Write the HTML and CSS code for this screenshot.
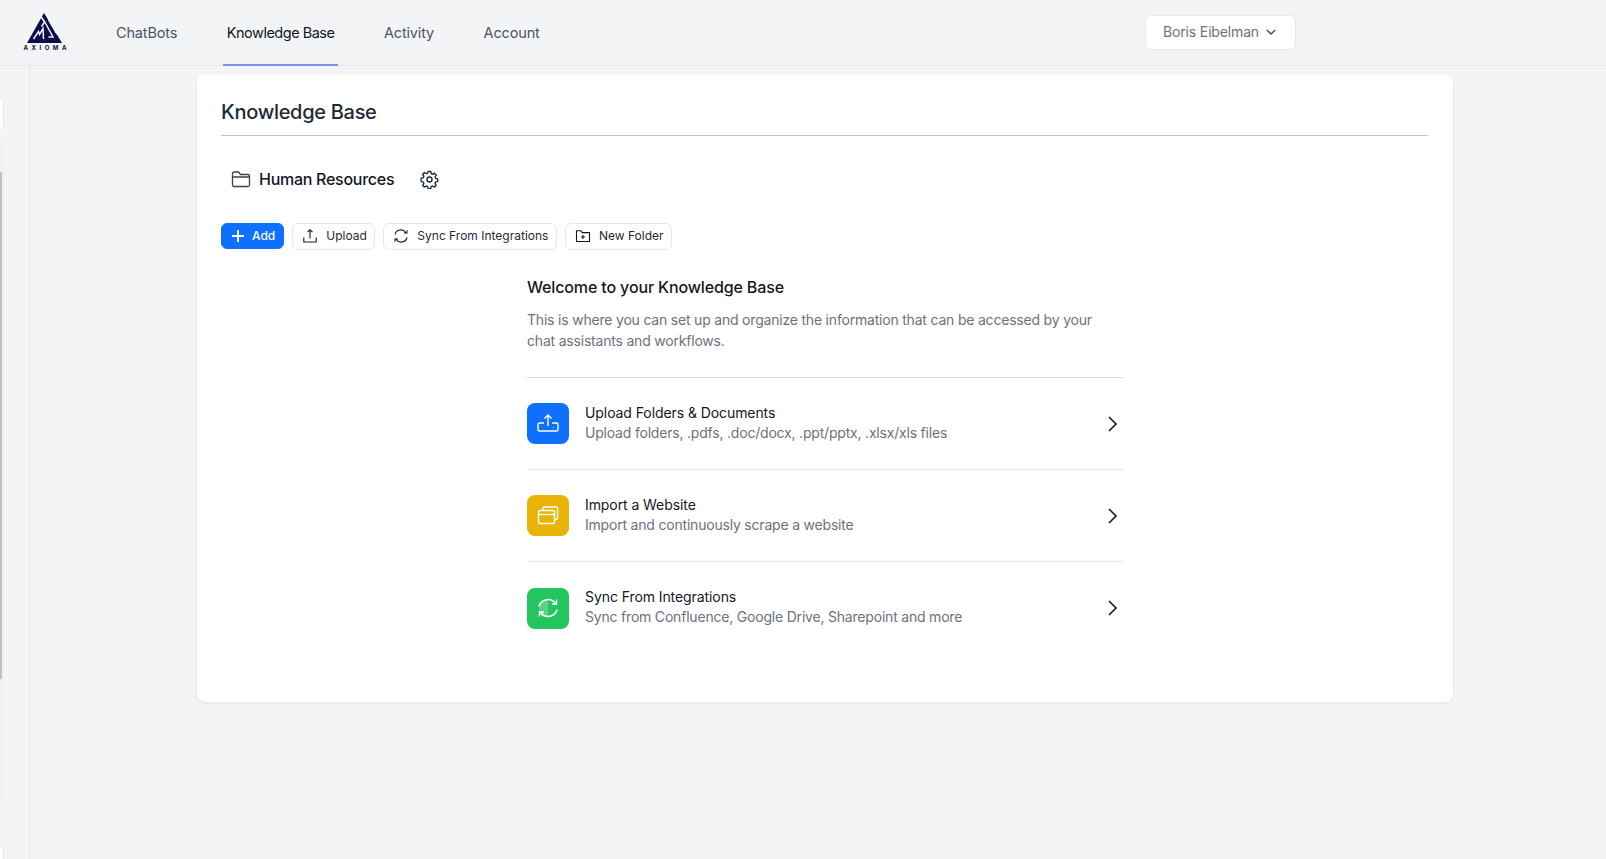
FILE: index.html
```html
<!DOCTYPE html>
<html lang="en">
<head>
<meta charset="utf-8">
<title>Knowledge Base</title>
<link rel="stylesheet" href="styles.css">
</head>
<body>
<header class="topbar">
  <a class="logo" href="#">
    <svg class="logo-mark" viewBox="0 0 36 31" width="36" height="31">
      <path fill="#0d0c4a" d="M17 0L35 30H0z"/>
      <path fill="none" stroke="#f3f4f6" stroke-width="1.500" d="M14 3.500l3.500 5.500M6.500 26l5-7.500 1 3 3.500-6 .5 10.500M17.500 9l-3 4.500M17 7.500l9 16.500h-4.500M21.500 6.500l8.500 14.500"/>
    </svg>
    <span class="logo-text">AXIOMA</span>
  </a>
  <nav class="nav">
    <a class="nav-link" href="#">ChatBots</a>
    <a class="nav-link active" href="#">Knowledge Base</a>
    <a class="nav-link" href="#">Activity</a>
    <a class="nav-link" href="#">Account</a>
  </nav>
  <button class="user-btn">Boris Eibelman
    <svg width="14" height="14" viewBox="0 0 14 14" fill="none" stroke="#4b5563" stroke-width="1.600"><path d="M2.800 5L7 9l4.200-4"/></svg>
  </button>
</header>
<div class="body-row">
  <aside class="sidebar">
    <div class="side-input"></div>
    <div class="side-track"><div class="side-thumb"></div></div>
    <div class="side-input side-bottom"></div>
  </aside>
  <main class="main">
    <section class="card">
      <h1 class="title">Knowledge Base</h1>
      <div class="folder-row">
        <svg width="20" height="20" viewBox="0 0 20 20" fill="none" stroke="#374151" stroke-width="1.300"><path d="M1.500 16V4.500A1.500 1.500 0 0 1 3 3h4.500l2 2.500H17A1.500 1.500 0 0 1 18.500 7v9a1.500 1.500 0 0 1-1.500 1.500H3A1.500 1.500 0 0 1 1.500 16zM1.500 8h17"/></svg>
        <span class="folder-name">Human Resources</span>
        <svg class="gear" width="19" height="19" viewBox="0 0 24 24" fill="none" stroke="#1f2937" stroke-width="1.700" stroke-linejoin="round"><path d="M10.300 2.500h3.400l.5 2.800 1.700.8 2.400-1.500 2.300 2.500-1.600 2.200.6 1.800 2.700.7v3.400l-2.700.6-.7 1.800 1.600 2.300-2.400 2.400-2.300-1.500-1.700.7-.5 2.800h-3.400l-.5-2.800-1.700-.7-2.300 1.500-2.400-2.400 1.600-2.300-.7-1.800-2.700-.6V11l2.700-.7.7-1.800-1.600-2.200 2.300-2.500 2.300 1.500 1.700-.8z" transform="translate(0 -.6)"/><circle cx="12" cy="12" r="3.200"/></svg>
      </div>
      <div class="toolbar">
        <button class="btn btn-primary">
          <svg width="14" height="14" viewBox="0 0 14 14" stroke="#fff" stroke-width="1.800"><path d="M7 1v12M1 7h12"/></svg>Add
        </button>
        <button class="btn">
          <svg width="16" height="16" viewBox="0 0 16 16" fill="none" stroke="#111827" stroke-width="1.100"><path d="M8 10.500V2M5.500 4.200L8 1.700l2.500 2.500M1.800 9.500v4.500h12.400V9.500" /></svg>Upload
        </button>
        <button class="btn">
          <svg width="16" height="16" viewBox="0 0 16 16" fill="none" stroke="#111827" stroke-width="1.100"><path d="M2 6.500A6 6 0 0 1 12.800 4.500M14 9.500A6 6 0 0 1 3.200 11.500M14 2.300V5h-3.200M2 13.700V11h3.200"/></svg>Sync From Integrations
        </button>
        <button class="btn">
          <svg width="16" height="16" viewBox="0 0 16 16" fill="none" stroke="#111827" stroke-width="1.100"><path d="M1.500 13.500V2.800h4.300l1.500 1.800h7.200v8.900zM8 7v4M6 9h4"/></svg>New Folder
        </button>
      </div>
      <div class="welcome">
        <h2 class="welcome-title">Welcome to your Knowledge Base</h2>
        <p class="welcome-text">This is where you can set up and organize the information that can be accessed by your chat assistants and workflows.</p>
        <ul class="options">
          <li class="option">
            <span class="tile tile-blue">
              <svg width="24" height="24" viewBox="0 0 24 24" fill="none" stroke="#fff" stroke-width="1.400"><path d="M12 14V3.500M8.500 6.500L12 3l3.500 3.500M8 11H3.500A1.500 1.500 0 0 0 2 12.500v5A1.500 1.500 0 0 0 3.500 19h17a1.500 1.500 0 0 0 1.500-1.500v-5a1.500 1.500 0 0 0-1.500-1.500H16M17.500 15.500h.5" /></svg>
            </span>
            <span class="option-body"><strong class="option-title">Upload Folders &amp; Documents</strong><span class="option-sub">Upload folders, .pdfs, .doc/docx, .ppt/pptx, .xlsx/xls files</span></span>
            <svg class="chev" width="16" height="20" viewBox="0 0 16 20" fill="none" stroke="#111827" stroke-width="1.600"><path d="M4 3l7 7-7 7"/></svg>
          </li>
          <li class="option">
            <span class="tile tile-yellow">
              <svg width="24" height="24" viewBox="0 0 24 24" fill="none" stroke="#fff" stroke-width="1.400"><path d="M7 6V4.500A1.500 1.500 0 0 1 8.500 3H20a1.500 1.500 0 0 1 1.500 1.500V14a1.500 1.500 0 0 1-1.500 1.500h-1.500"/><rect x="2.500" y="6.500" width="16" height="13" rx="1.500"/><path d="M2.500 10.500h16"/></svg>
            </span>
            <span class="option-body"><strong class="option-title">Import a Website</strong><span class="option-sub">Import and continuously scrape a website</span></span>
            <svg class="chev" width="16" height="20" viewBox="0 0 16 20" fill="none" stroke="#111827" stroke-width="1.600"><path d="M4 3l7 7-7 7"/></svg>
          </li>
          <li class="option">
            <span class="tile tile-green">
              <svg width="24" height="24" viewBox="0 0 24 24" fill="none" stroke="#fff" stroke-width="1.500"><path fill="#fff" fill-opacity=".25" stroke="none" d="M3 12a9 9 0 0 1 9-9v18a9 9 0 0 1-9-9z"/><path d="M3 10.500A9.200 9.200 0 0 1 19.500 7.500M21 13.500A9.200 9.200 0 0 1 4.500 16.500M20.500 3.500v4.500h-4.500M3.500 20.500V16h4.500"/></svg>
            </span>
            <span class="option-body"><strong class="option-title">Sync From Integrations</strong><span class="option-sub">Sync from Confluence, Google Drive, Sharepoint and more</span></span>
            <svg class="chev" width="16" height="20" viewBox="0 0 16 20" fill="none" stroke="#111827" stroke-width="1.600"><path d="M4 3l7 7-7 7"/></svg>
          </li>
        </ul>
      </div>
    </section>
  </main>
</div>
</body>
</html>
```

FILE: styles.css
```css
* { box-sizing: border-box; }
html, body { height: 100%; }
body {
  margin: 0;
  background: #f3f4f6;
  color: #111827;
  font-family: Inter, "Noto Sans", sans-serif;
  overflow: hidden;
  display: flex;
  flex-direction: column;
}
a { color: inherit; text-decoration: none; }

.topbar {
  height: 66px;
  flex: none;
  display: flex;
  align-items: stretch;
  border-bottom: 1px solid #e5e7eb;
  padding-left: 23px;
}
.logo {
  width: 44px;
  display: flex;
  flex-direction: column;
  align-items: center;
  padding-top: 13px;
  color: #0d0c4a;
}
.logo-mark { display: block; height: 31px; flex: none; }
.logo-text {
  font-size: 6px;
  font-weight: 700;
  letter-spacing: 3.500px;
  margin-right: -3.500px;
  line-height: 6px;
  margin-top: 1px;
  white-space: nowrap;
}
.nav { display: flex; margin-left: 45px; gap: 41.500px; }
.nav-link {
  padding: 0 4px;
  display: flex;
  align-items: center;
  font-size: 14.500px;
  letter-spacing: -.15px;
  color: #4b5563;
  height: 66px;
  border-bottom: 2px solid transparent;
}
.nav-link.active { color: #111827; letter-spacing: -.5px; border-bottom-color: #818cf8; }
.user-btn {
  margin: 15px 0 0 auto;
  position: relative;
  right: 310px;
  width: 151px;
  height: 35px;
  background: #fff;
  border: 1px solid #e5e7eb;
  border-radius: 6px;
  font: inherit;
  font-size: 14px;
  letter-spacing: -.15px;
  color: #6b7280;
  display: flex;
  align-items: center;
  justify-content: center;
  gap: 5px;
  padding: 0 0 2px;
}

.body-row { flex: 1; display: flex; min-height: 0; }
.sidebar {
  width: 30px;
  flex: none;
  border-right: 1px solid #e5e7eb;
  padding-top: 31px;
  display: flex;
  flex-direction: column;
}
.side-input {
  width: 4px;
  height: 33px;
  flex: none;
  background: #fff;
  border: 1px solid #e5e7eb;
  border-left: 0;
  border-radius: 0 5px 5px 0;
}
.side-track {
  width: 4px;
  height: 656px;
  margin-top: 17px;
  flex: none;
  background: #f0f0f0;
  padding-top: 25px;
}
.side-thumb { width: 2px; height: 507px; background: #c1c1c1; }
.side-bottom { margin-top: 42px; }

.main { flex: 1; min-width: 0; padding: 8px 0 0 167px; }
.card {
  width: 1256px;
  height: 628px;
  background: #fff;
  border-radius: 8px;
  box-shadow: 0 1px 3px rgba(0, 0, 0, .08);
  padding: 24px 25px 0 24px;
}
.title {
  margin: 0;
  font-size: 20px;
  letter-spacing: -.3px;
  line-height: 28px;
  height: 38px;
  font-weight: 500;
  color: #1f2937;
  border-bottom: 1px solid #c4c4c4;
}
.folder-row {
  display: flex;
  align-items: center;
  margin-top: 32px;
  padding-left: 10px;
  height: 22px;
}
.folder-name { margin-left: 8px; font-size: 16px; letter-spacing: -.27px; font-weight: 500; color: #111827; }
.gear { margin-left: 26px; }

.toolbar { display: flex; gap: 8px; margin-top: 33px; }
.btn {
  height: 27px;
  display: flex;
  align-items: center;
  gap: 8px;
  padding: 0 7.500px 2px 9px;
  background: #fff;
  border: 1px solid #e5e7eb;
  border-radius: 6px;
  font: inherit;
  font-size: 12px;
  color: #1f2937;
}
.btn-primary {
  background: #0f6fff;
  border-color: #0f6fff;
  color: #fff;
  font-weight: 500;
  gap: 7px;
  padding: 0 8px 1px 9px;
  height: 26px;
}

.welcome { width: 596px; margin: 0 0 0 306px; padding-top: 26px; }
.welcome-title { margin: 0; font-size: 16px; letter-spacing: -.14px; line-height: 22px; font-weight: 500; color: #111827; }
.welcome-text { margin: 11px 0 0; font-size: 14px; letter-spacing: -.2px; line-height: 21px; color: #6b7280; }
.options { list-style: none; margin: 26px 0 0; padding: 0; border-top: 1px solid #d9dbe0; }
.option {
  height: 92px;
  display: flex;
  align-items: center;
  gap: 16px;
  border-bottom: 1px solid #e5e7eb;
}
.option:last-child { border-bottom: 0; }
.tile {
  width: 42px;
  height: 41px;
  border-radius: 8px;
  display: flex;
  align-items: center;
  justify-content: center;
  flex: none;
}
.tile-blue { background: #0f6fff; }
.tile-yellow { background: #eab308; }
.tile-green { background: #22c55e; }
.option-body { flex: 1; display: flex; flex-direction: column; padding-bottom: 2px; }
.option-title { font-size: 14px; letter-spacing: -.08px; line-height: 20px; font-weight: 400; color: #111827; }
.option-sub { font-size: 14px; letter-spacing: -.2px; line-height: 20px; color: #6b7280; }
.chev { flex: none; margin-right: 2px; }
```
